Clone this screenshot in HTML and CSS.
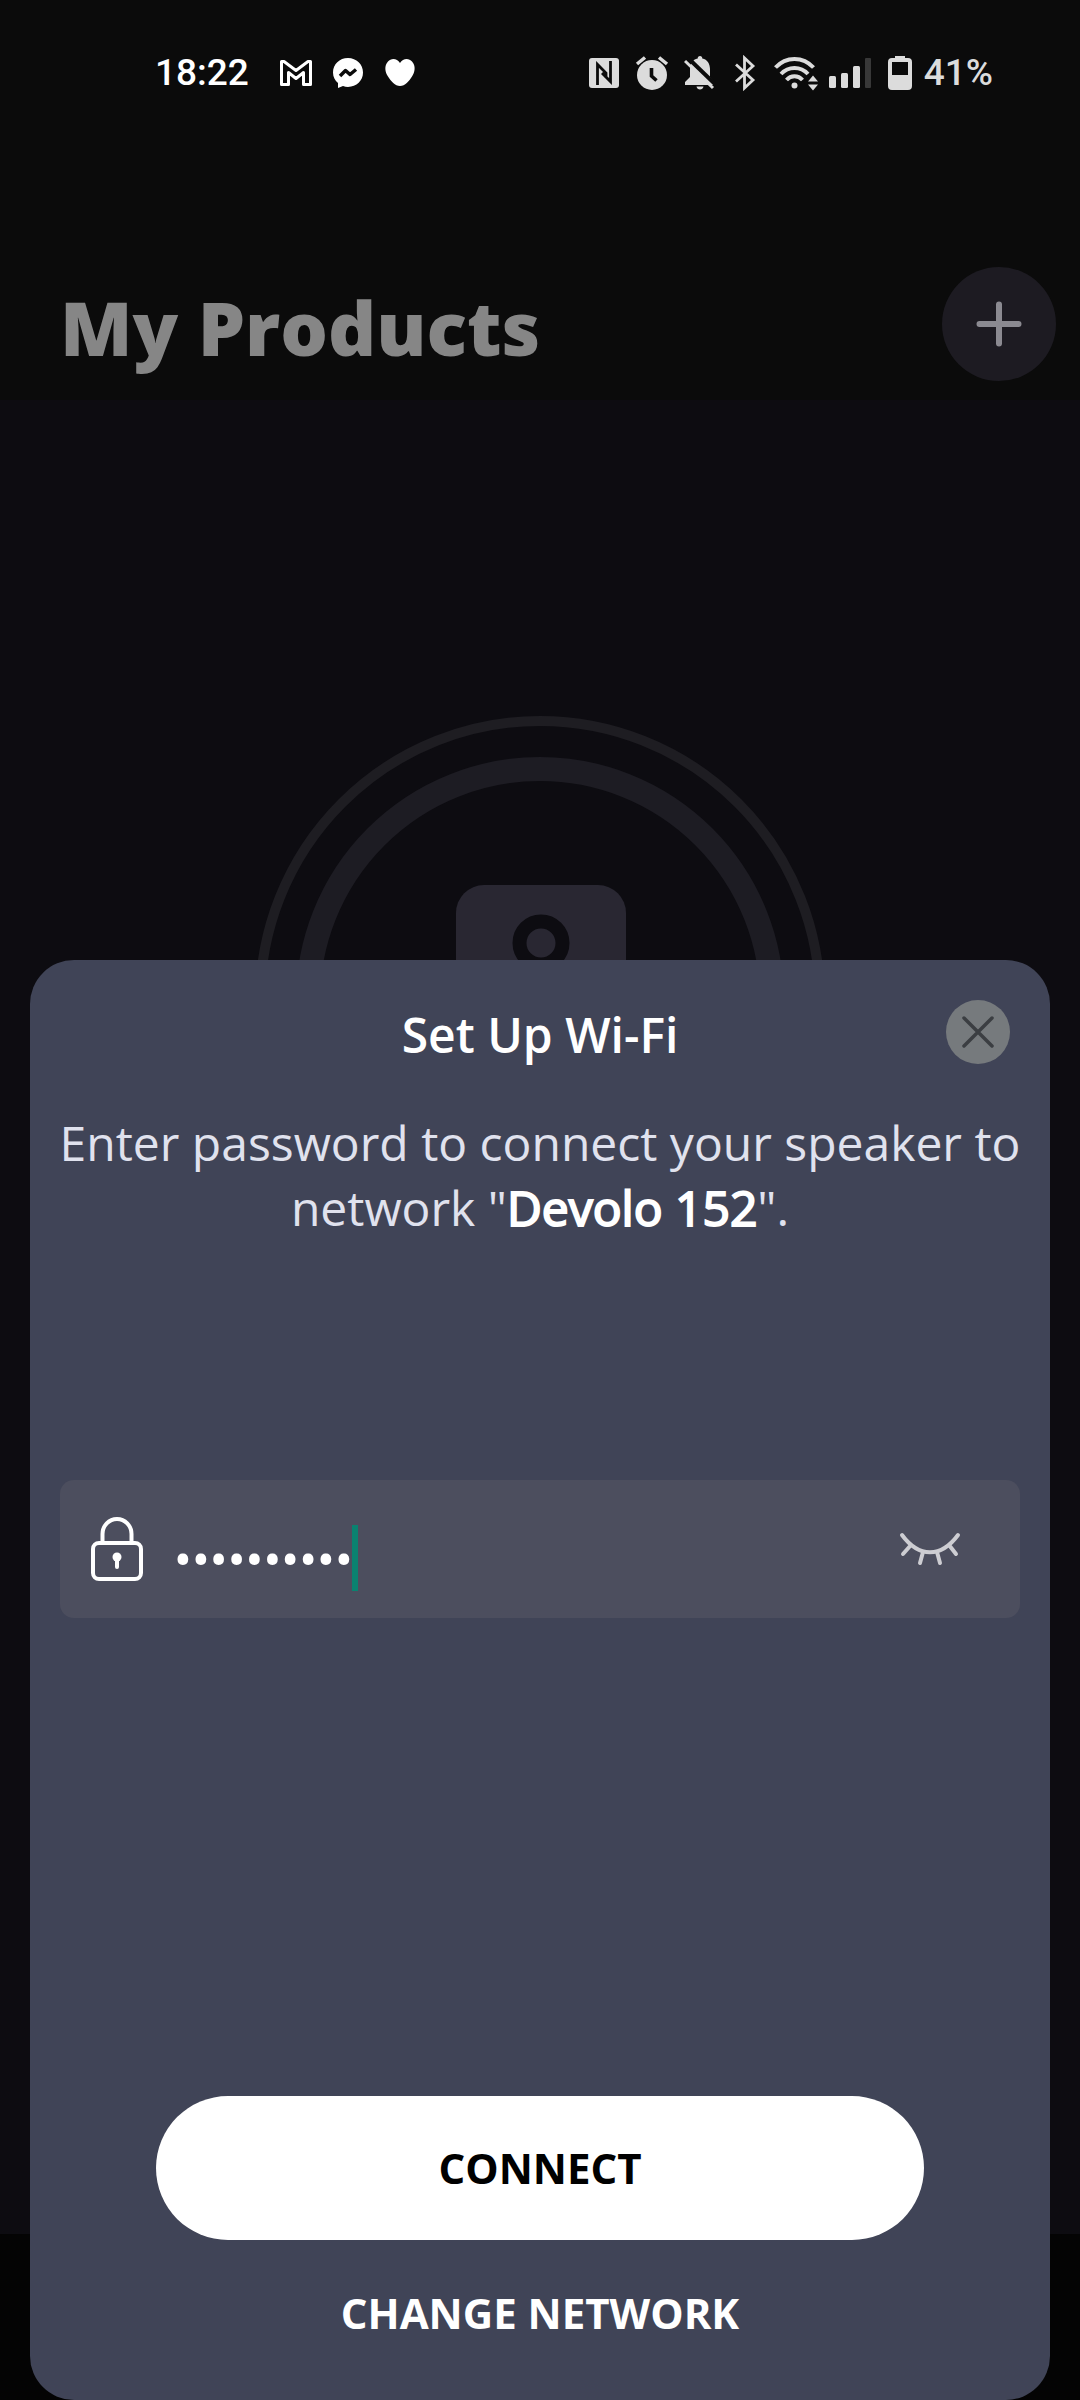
FILE: index.html
```html
<!DOCTYPE html>
<html lang="en">
<head>
<meta charset="utf-8">
<meta name="viewport" content="width=device-width, initial-scale=1">
<title>Set Up Wi-Fi</title>
<link rel="stylesheet" href="styles.css">
</head>
<body>
<div class="app">
  <div class="top">
    <div class="status">
      <span class="clock">18:22</span>
      <svg class="gmail" width="34" height="28" viewBox="0 0 34 28" fill="none" stroke="#fff" stroke-width="3" stroke-linejoin="round"><path d="M2.500 2.500H5L17 11.500 29 2.500H31.500V25.500H24.500V13.500L17 19.500 9.500 13.500V25.500H2.500Z"/></svg>
      <svg class="messenger" width="32" height="32" viewBox="0 0 32 32"><path fill="#fff" d="M16 1C7.500 1 1 7.300 1 15.500c0 4.500 2 8 5 10.500v5l5-2c1.600.6 3.300.9 5 .9 8.500 0 15-6.300 15-14.400S24.500 1 16 1Z"/><path d="m8 19 5.500-5.500 4.500 4 6-5" fill="none" stroke="#0b0b0b" stroke-width="3.500" stroke-linejoin="round"/></svg>
      <svg class="heart" width="32" height="30" viewBox="0 0 32 30"><path fill="#fff" d="M16 5C13 0 7 0 4 3.500 0 8 1 14 4 18.500 7 23 11 28 16 28s9-5 12-9.500C31 14 32 8 28 3.500 25 0 19 0 16 5Z"/></svg>
      <span class="spacer"></span>
      <svg width="32" height="32" viewBox="0 0 32 32"><rect x="1" y="1" width="30" height="30" rx="3" fill="#dcdcdc"/><path d="M9.500 28V7.500L18 16v5M22.500 4v20.500L14 16" fill="none" stroke="#0b0b0b" stroke-width="2.800"/></svg>
      <svg class="alarm" width="34" height="36" viewBox="0 0 34 36"><circle cx="17" cy="20" r="15" fill="#dcdcdc"/><path d="m2 9 8-6.500M32 9l-8-6.500" stroke="#dcdcdc" stroke-width="3.500"/><path d="M16.500 13v8l5 4.500" fill="none" stroke="#0b0b0b" stroke-width="3.600"/></svg>
      <svg class="bell" width="32" height="36" viewBox="0 0 32 36"><path fill="#dcdcdc" d="M16 1c1.500 0 2.300 1 2.300 2.500C23.500 4.500 26 9 26 14v8l5 6v2H1v-3l5-5v-8C6 9 8.500 4.500 13.700 3.500 13.700 2 14.500 1 16 1ZM12.500 31.500h7c-.5 4-6.500 4-7 0Z"/><path d="m4 3 28 27" stroke="#0b0b0b" stroke-width="4"/><path d="m1 6 28 27" stroke="#dcdcdc" stroke-width="3"/></svg>
      <svg class="bluetooth" width="22" height="36" viewBox="0 0 22 36" fill="none" stroke="#dcdcdc" stroke-width="2.800"><path d="m2 9.500 17 15.500-8.500 8V3L19 11 2 26.500"/></svg>
      <svg class="wifi" width="44" height="36" viewBox="0 0 44 36" fill="none" stroke="#dcdcdc"><g stroke-width="4"><path d="M1.500 12.500C12 1 29 1 39.500 12.500"/><path d="M7 19c7.500-8 19.500-8 27 0"/><path d="M12.500 25c4.500-5 11.500-5 16 0"/></g><circle cx="20.500" cy="30.500" r="3" fill="#dcdcdc" stroke="none"/><path d="m34 26.500 5-6 5 6ZM34 29.500h10l-5 6Z" fill="#dcdcdc" stroke="none"/></svg>
      <svg class="signal" width="44" height="32" viewBox="0 0 44 32" fill="#dcdcdc"><rect x="1" y="19" width="7" height="12" rx="1.500"/><rect x="13" y="16" width="7" height="15" rx="1.500"/><rect x="25" y="9" width="7" height="22" rx="1.500"/><rect x="37" y="1" width="6" height="30" rx="1" fill="#383838"/></svg>
      <svg class="battery" width="24" height="36" viewBox="0 0 24 36"><path fill="#dcdcdc" fill-rule="evenodd" d="M7 3V1h10v2h3q4 0 4 4v24q0 4-4 4H4q-4 0-4-4V7q0-4 4-4ZM4 7v13h16V7Z"/></svg>
      <span class="percent">41%</span>
    </div>
    <header class="header">
      <h1>My Products</h1>
      <button class="add" type="button" aria-label="Add product"><svg width="46" height="46" viewBox="0 0 46 46" stroke="#8b8a91" stroke-width="6" stroke-linecap="round"><path d="M23 3.500v39M3.500 23h39"/></svg></button>
    </header>
  </div>
  <main class="stage">
    <svg width="572" height="572" viewBox="0 0 572 572" fill="none" aria-hidden="true">
      <circle cx="286" cy="286" r="280" stroke="#1e1d22" stroke-width="10"/>
      <circle cx="286" cy="286" r="232" stroke="#1d1c23" stroke-width="24"/>
      <rect x="202" y="170" width="170" height="232" rx="28" fill="#292732"/>
      <circle cx="287" cy="228" r="21.500" stroke="#0d0c11" stroke-width="14"/>
    </svg>
  </main>
  <footer class="navbar"></footer>
</div>

<section class="sheet" role="dialog" aria-labelledby="sheet-title">
  <div class="sheet-head">
    <h2 id="sheet-title">Set Up Wi-Fi</h2>
    <button class="close" type="button" aria-label="Close"><svg width="32" height="32" viewBox="0 0 32 32" stroke="#3b3e42" stroke-width="3.500" stroke-linecap="round"><path d="m2 2 28 28M30 2 2 30"/></svg></button>
  </div>
  <p class="message">Enter password to connect your speaker to network "<strong>Devolo 152</strong>".</p>
  <div class="field">
    <svg width="52" height="64" viewBox="0 0 52 64" fill="none" stroke="#fff" stroke-width="4"><rect x="2" y="26" width="48" height="36" rx="6"/><path d="M11.500 26V17a14.500 15 0 0 1 29 0v9"/><circle cx="26" cy="40" r="4.500" fill="#fff" stroke="none"/><path d="M26 40v10" stroke-linecap="round"/></svg>
    <input class="password" id="password" type="password" aria-label="Wi-Fi password" value="devolo1523">
    <span class="caret"></span>
    <button class="reveal" type="button" aria-label="Show password"><svg width="62" height="36" viewBox="0 0 62 36" fill="none" stroke="#cdcdd2" stroke-width="4" stroke-linecap="round"><path d="M3 4c17 23 39 23 56 0M12 14l-8 9M24 21l-3 11M38 21l3 11M50 14l7 9"/></svg></button>
  </div>
  <div class="actions">
    <button class="connect" type="button">CONNECT</button>
    <button class="change" type="button">CHANGE NETWORK</button>
  </div>
</section>
</body>
</html>
```
FILE: styles.css
```css
* { box-sizing: border-box; }

body {
  margin: 0;
  min-height: 100vh;
  position: relative;
  display: flex;
  background: #0d0c11;
  font-family: "Open Sans", "Noto Sans", sans-serif;
  color: #fff;
}

button {
  padding: 0;
  border: 0;
  background: none;
  font: inherit;
  color: inherit;
}

svg { display: block; flex: none; }

.app {
  flex: 1;
  display: flex;
  flex-direction: column;
}

.top { background: #0b0b0b; }

.status {
  height: 144px;
  padding: 1px 87px 0 155px;
  display: flex;
  align-items: center;
  font: 500 37px/44px Roboto, sans-serif;
}

.gmail { margin-left: 30px; }
.messenger { margin-left: 19px; }
.heart { margin-left: 20px; }
.spacer { flex: 1; }
.alarm { margin-left: 15px; }
.bell { margin-left: 15px; }
.bluetooth { margin-left: 18px; }
.wifi { margin-left: 18px; }
.signal { margin-left: 10px; }
.battery { margin-left: 16px; }
.percent { margin-left: 12px; color: #dcdcdc; }

.header {
  height: 256px;
  padding: 123px 24px 0 60px;
  display: flex;
  align-items: flex-start;
  justify-content: space-between;
}

.header h1 {
  margin: 8px 0 0;
  font-size: 75px;
  line-height: 104px;
  font-weight: 800;
  color: #868686;
}

.add {
  width: 114px;
  height: 114px;
  border-radius: 50%;
  background: #1d1b22;
  display: grid;
  place-items: center;
}

.stage {
  flex: 1;
  padding-top: 315px;
  display: flex;
  align-items: flex-start;
  justify-content: center;
}

.navbar {
  height: 166px;
  background: #040404;
}

.sheet {
  position: absolute;
  inset: 960px 30px 0;
  padding: 40px 30px 58px;
  border-radius: 44px;
  background: #404457;
  display: flex;
  flex-direction: column;
}

.sheet-head {
  display: grid;
  grid-template-columns: 64px 1fr 64px;
  padding: 0 10px;
  text-align: center;
}

.sheet-head h2 {
  grid-column: 2;
  margin: 0;
  padding-top: 2px;
  font-size: 48px;
  line-height: 66px;
  font-weight: 600;
}

.close {
  width: 64px;
  height: 64px;
  border-radius: 50%;
  background: #767a7d;
  display: grid;
  place-items: center;
}

.message {
  margin: 42px -10px 0;
  font-size: 48px;
  line-height: 65px;
  text-align: center;
  color: #e0e2ee;
}

.message strong {
  font-weight: 400;
  -webkit-text-stroke: 2px #fff;
  color: #fff;
}

.field {
  height: 138px;
  margin-top: 240px;
  padding: 0 59px 0 31px;
  border-radius: 14px;
  background: #4c4e5e;
  display: flex;
  align-items: center;
}

.password {
  width: 182px;
  height: 66px;
  margin: 24px 0 0 31px;
  padding: 0;
  border: 0;
  outline: 0;
  background: none;
  font: 53px/66px Roboto, sans-serif;
  color: #fff;
}

.caret {
  width: 6px;
  height: 66px;
  margin: 18px 0 0 -4px;
  background: #0a8270;
}

.reveal { margin-left: auto; }

.actions {
  margin-top: auto;
  display: flex;
  flex-direction: column;
  align-items: center;
  font-size: 42px;
  line-height: 58px;
  font-weight: 700;
}

.connect {
  width: 80%;
  height: 144px;
  border-radius: 72px;
  background: #fff;
  color: #000;
}

.change {
  margin-top: 44px;
  font-weight: 700;
}
```
